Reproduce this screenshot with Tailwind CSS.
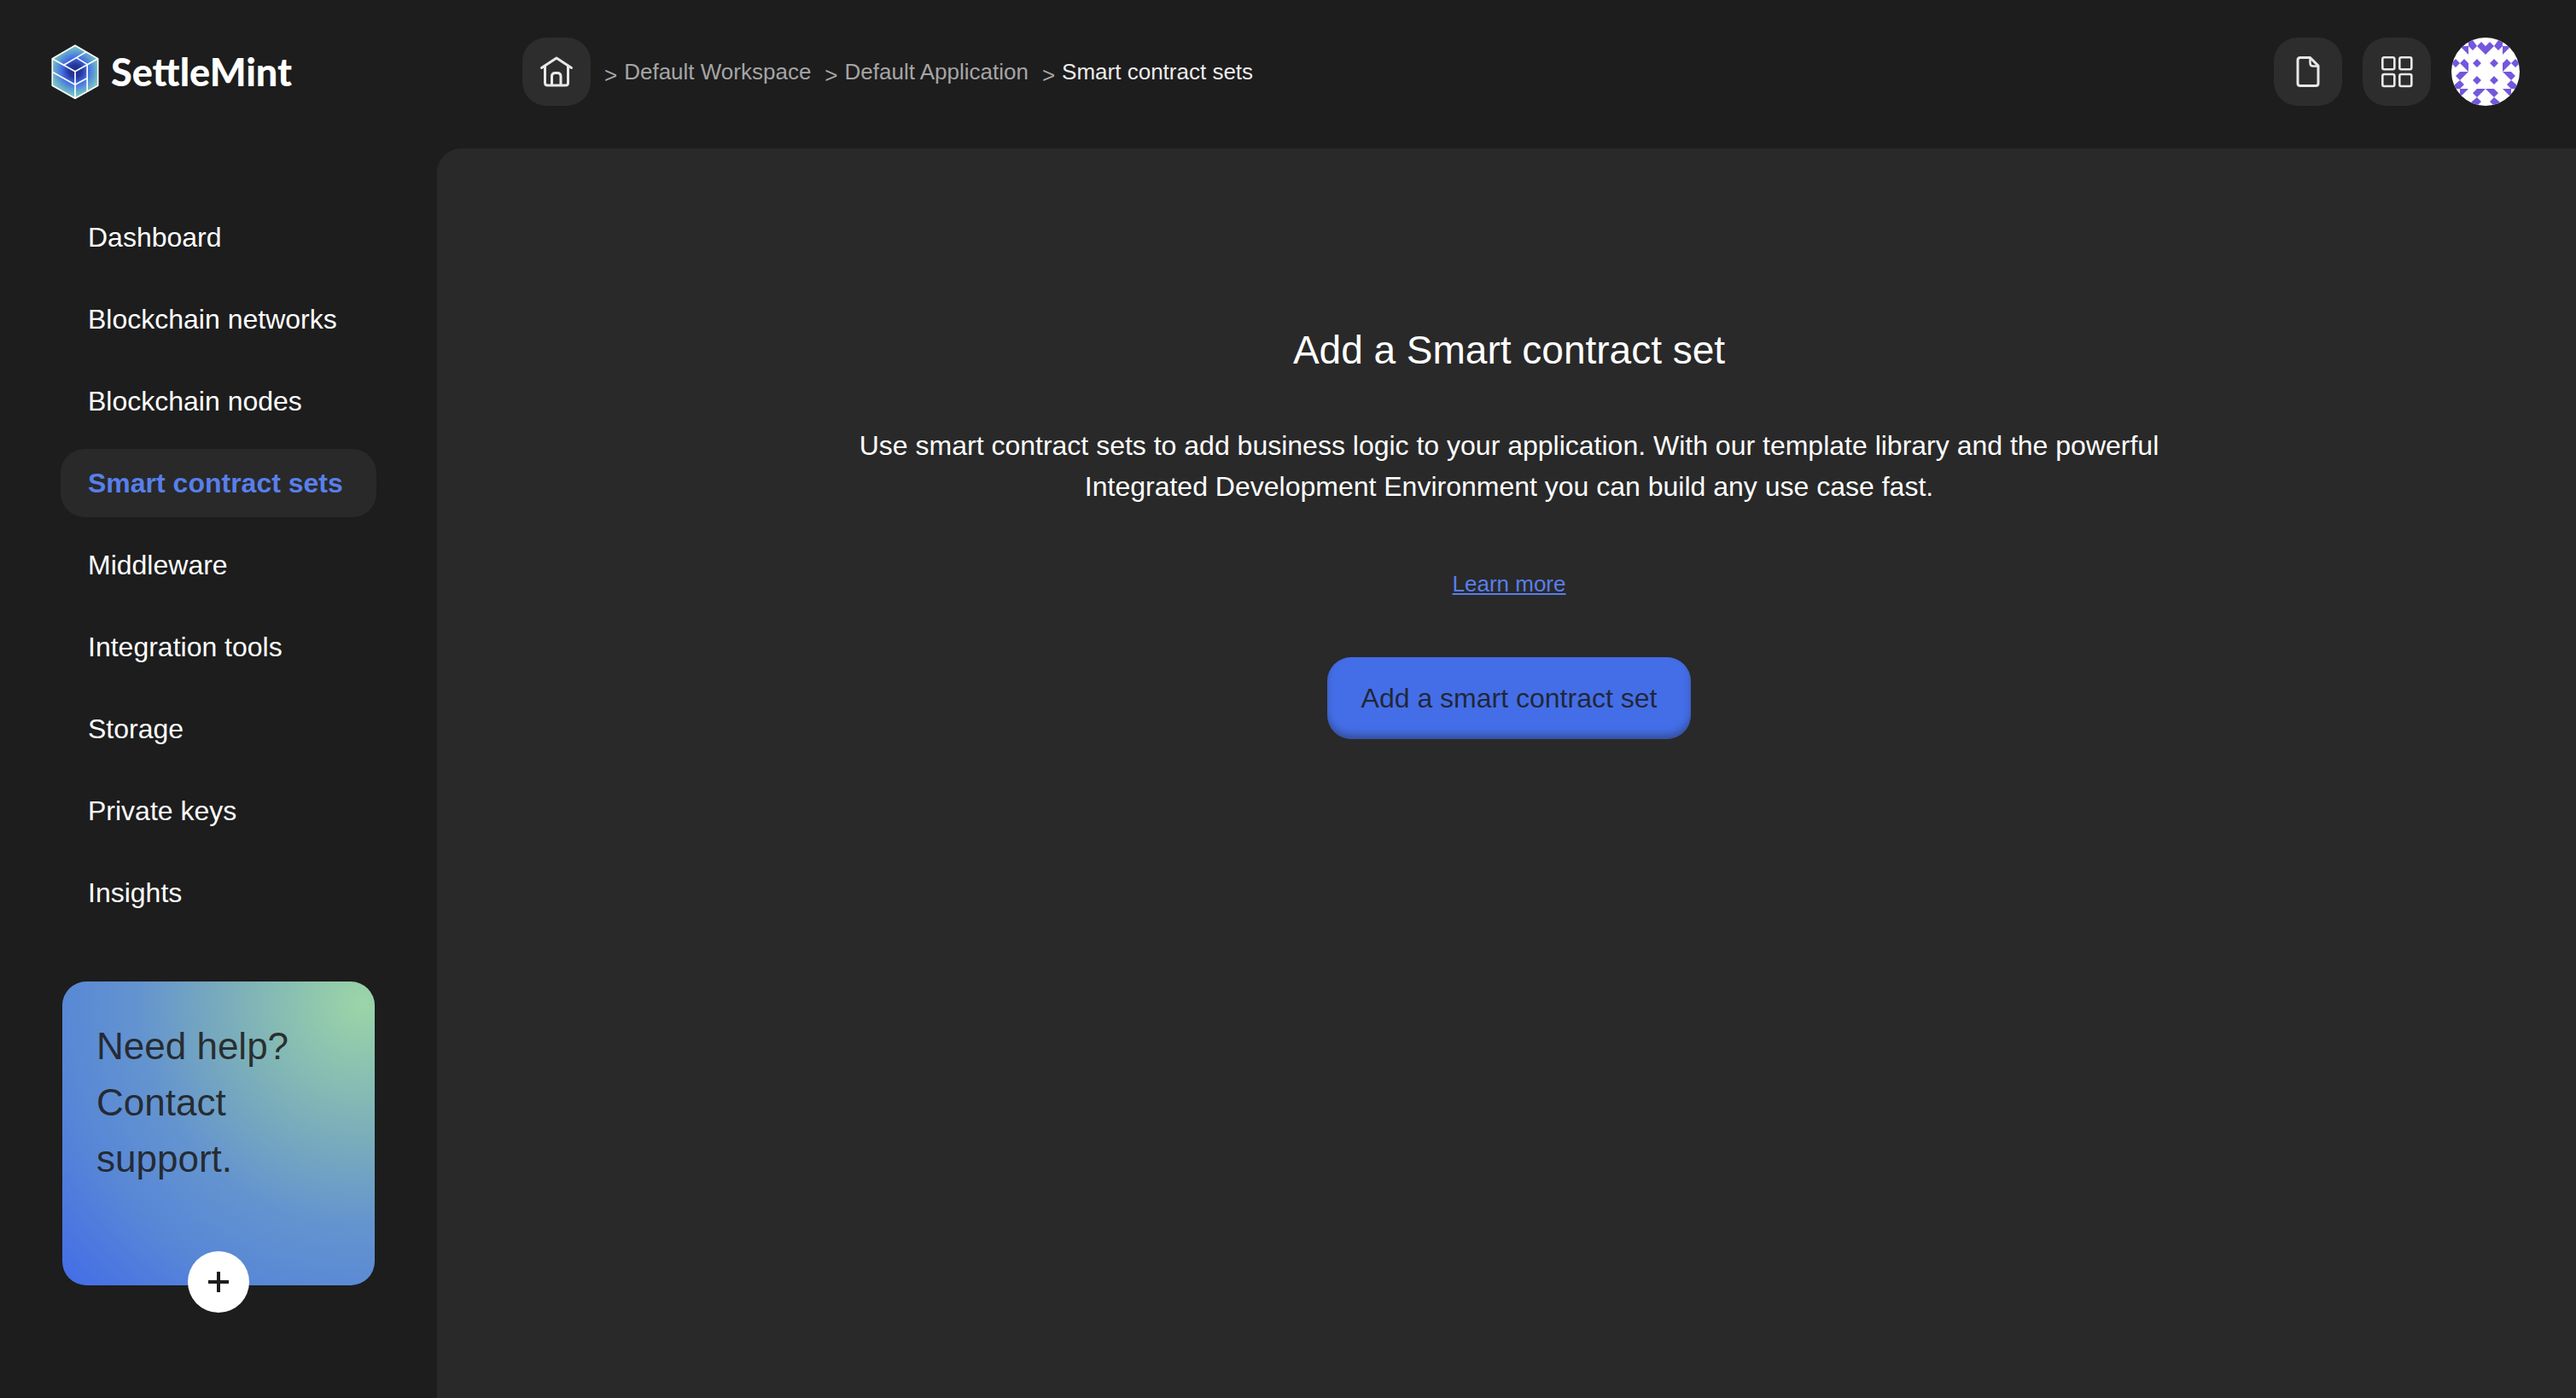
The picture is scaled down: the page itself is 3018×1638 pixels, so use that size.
<!DOCTYPE html>
<html lang="en">
<head>
<meta charset="utf-8">
<title>SettleMint</title>
<script src="https://cdn.jsdelivr.net/npm/@tailwindcss/browser@4"></script>
</head>
<body class="flex min-h-screen flex-col bg-[#1d1d1d] font-['Liberation_Sans',Arial,sans-serif] text-[32px] leading-[48px] text-white">
<header class="flex h-[174px] shrink-0 items-start pt-[44px] pr-[66px] pl-[60px]">
  <a href="#" class="flex h-20 w-[552px] items-center gap-[14px]" aria-label="SettleMint">
    <svg class="h-16 w-14" viewBox="59 64 168 194" fill="none" stroke="#fff" stroke-width="5" stroke-linejoin="round">
      <defs>
        <radialGradient id="cube" gradientUnits="userSpaceOnUse" cx="143" cy="158" r="94">
          <stop offset="0" stop-color="#1e2c86"/>
          <stop offset=".25" stop-color="#2639a0"/>
          <stop offset=".5" stop-color="#446ee6"/>
          <stop offset=".75" stop-color="#62a5cd"/>
          <stop offset=".95" stop-color="#7ccac2"/>
        </radialGradient>
      </defs>
      <path fill="url(#cube)" d="M143 68l81 47v95l-81 46-81-46v-95z"/>
      <path d="M62 115l81 45 81-45M143 160v96M182 91l-78 46M149 112l37 23v96M143 207l43-23M62 162l81 45"/>
    </svg>
    <span class="font-['Lato',sans-serif] text-[45px] font-black">SettleMint</span>
  </a>
  <nav aria-label="Breadcrumb" class="flex h-20 items-center text-[26px] leading-10 text-[#a5a5a5]">
    <a href="#" aria-label="Home" class="grid size-20 place-items-center rounded-[28px] bg-[#2d2d2d]">
      <svg class="size-10" viewBox="0 0 40 40" fill="none" stroke="#e8e8e8" stroke-width="3" stroke-linecap="round" stroke-linejoin="round">
        <path d="M2.500 15.500L20 4l17.500 11.500M6.500 14v19q0 3 3 3h21q3 0 3-3V14M14.500 35V25.500q0-4 4-4h2.500q4 0 4 4V35"/>
      </svg>
    </a>
    <ol class="ml-4 flex items-center gap-4">
      <li class="flex items-center gap-2"><span class="mt-2">&gt;</span><a href="#">Default Workspace</a></li>
      <li class="flex items-center gap-2"><span class="mt-2">&gt;</span><a href="#">Default Application</a></li>
      <li class="flex items-center gap-2"><span class="mt-2">&gt;</span><a href="#" aria-current="page" class="text-[#ececec]">Smart contract sets</a></li>
    </ol>
  </nav>
  <div class="ml-auto flex gap-6">
    <button type="button" aria-label="Documentation" class="grid size-20 place-items-center rounded-[28px] bg-[#2d2d2d]">
      <svg class="size-10" viewBox="0 0 40 40" fill="none" stroke="#e8e8e8" stroke-width="3" stroke-linejoin="round">
        <path d="M11 3.500h11.500L32 13v20.500q0 3-3 3H11q-3 0-3-3v-27q0-3 3-3z"/>
        <path stroke-width="2.500" d="M22.500 4v6q0 3.500 3.500 3.500h5.500"/>
      </svg>
    </button>
    <button type="button" aria-label="Applications" class="grid size-20 place-items-center rounded-[28px] bg-[#2d2d2d]">
      <svg class="size-10" viewBox="0 0 40 40" fill="none" stroke="#e8e8e8" stroke-width="2.600">
        <rect x="3.300" y="3.300" width="14" height="14" rx="2"/>
        <rect x="23.300" y="3.300" width="14" height="14" rx="2"/>
        <rect x="3.300" y="23" width="14" height="14" rx="2"/>
        <rect x="23.300" y="23" width="14" height="14" rx="2"/>
      </svg>
    </button>
    <button type="button" aria-label="Account" class="size-20 overflow-hidden rounded-full bg-white">
      <svg class="size-20" viewBox="0 0 80 80" fill="#7357dc">
        <defs>
          <path id="half" d="M30 25l5 5-5 5-5-5zM30 45l5 5-5 5-5-5zM30 10l5-5 5 5v10zM20 0l5 3 5 7-5 5-5-5zM10 10h10v10zM5 25l5 5-5 5-5-5zM10 30l5-5 5 5v10zM10 40h10L10 50l-5-5zM10 50l5 5-5 5H0l4-5zM10 60h10L10 70zM30 60h10L30 70l-5-5zM30 70l5 5-5 5H20l4-5z"/>
        </defs>
        <use href="#half"/>
        <use href="#half" transform="matrix(-1 0 0 1 80 0)"/>
      </svg>
    </button>
  </div>
</header>
<div class="flex grow">
  <aside class="flex w-[512px] shrink-0 flex-col px-[71px] pt-16">
    <nav aria-label="Main" class="flex flex-col gap-4">
      <a href="#" class="rounded-[28px] px-8 py-4">Dashboard</a>
      <a href="#" class="rounded-[28px] px-8 py-4">Blockchain networks</a>
      <a href="#" class="rounded-[28px] px-8 py-4">Blockchain nodes</a>
      <a href="#" aria-current="page" class="rounded-[28px] bg-[#292929] px-8 py-4 font-bold text-[#587fea]">Smart contract sets</a>
      <a href="#" class="rounded-[28px] px-8 py-4">Middleware</a>
      <a href="#" class="rounded-[28px] px-8 py-4">Integration tools</a>
      <a href="#" class="rounded-[28px] px-8 py-4">Storage</a>
      <a href="#" class="rounded-[28px] px-8 py-4">Private keys</a>
      <a href="#" class="rounded-[28px] px-8 py-4">Insights</a>
    </nav>
    <section class="relative mx-0.5 mt-16 h-[356px] rounded-[28px] bg-[radial-gradient(circle_farthest-corner_at_96%_7%,#9bd5a7_0%,#7aadbb_33%,#6494cf_54%,#5786d7_75%,#436ce7_100%)] px-10 pt-[43px]">
      <p class="text-[44px] leading-[66px] text-[#1d1d1d]/90">Need help?<br>Contact<br>support.</p>
      <button type="button" aria-label="Contact support" class="absolute -bottom-8 left-1/2 grid size-[72px] -translate-x-1/2 place-items-center rounded-full bg-white">
        <svg class="size-6" viewBox="0 0 24 24" stroke="#1d1d1d" stroke-width="4"><path d="M12 0v24M0 12h24"/></svg>
      </button>
    </section>
  </aside>
  <main class="flex grow flex-col items-center rounded-tl-[28px] bg-[#292929] pt-[204px] pl-[6px] text-center">
    <h1 class="text-[46px] leading-[64px]">Add a Smart contract set</h1>
    <p class="mt-14 max-w-[1600px]">Use smart contract sets to add business logic to your application. With our template library and the powerful Integrated Development Environment you can build any use case fast.</p>
    <a href="#" class="mt-[70px] text-[26px] leading-10 text-[#587fea] underline">Learn more</a>
    <button type="button" class="mt-[66px] rounded-[28px] bg-[#446ee8] px-10 py-6 text-[#1d1d1d]/90 shadow-[inset_0_-6px_8px_-1px_rgba(29,29,29,0.4)]">Add a smart contract set</button>
  </main>
</div>
</body>
</html>
